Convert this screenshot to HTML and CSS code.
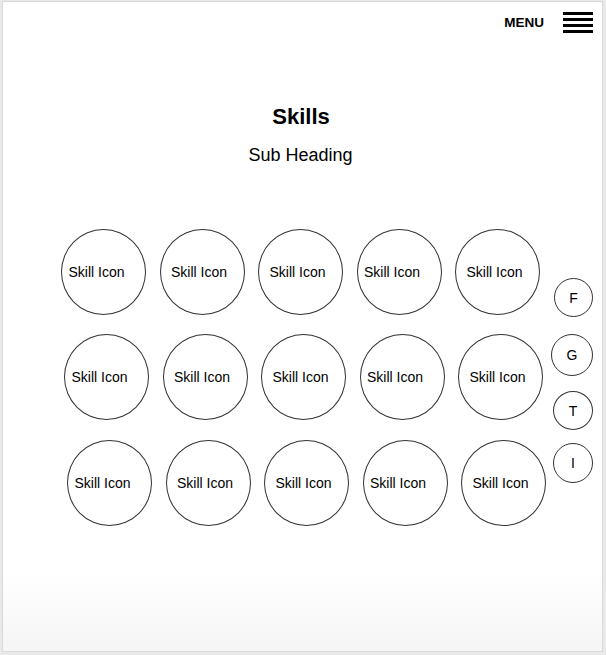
FILE: index.html
```html
<!DOCTYPE html>
<html>
<head>
<meta charset="utf-8">
<link rel="stylesheet" href="styles.css">
</head>
<body>
<div class="frame">
  <header class="header">
    <span class="menu-label">MENU</span>
    <span class="burger"><i></i><i></i><i></i><i></i></span>
  </header>
  <h1 class="title">Skills</h1>
  <p class="subtitle">Sub Heading</p>
  <div class="content">
    <div class="grid">
      <div class="row row-1">
        <div class="skill">Skill Icon</div>
        <div class="skill">Skill Icon</div>
        <div class="skill">Skill Icon</div>
        <div class="skill">Skill Icon</div>
        <div class="skill">Skill Icon</div>
      </div>
      <div class="row row-2">
        <div class="skill">Skill Icon</div>
        <div class="skill">Skill Icon</div>
        <div class="skill">Skill Icon</div>
        <div class="skill">Skill Icon</div>
        <div class="skill">Skill Icon</div>
      </div>
      <div class="row row-3">
        <div class="skill">Skill Icon</div>
        <div class="skill">Skill Icon</div>
        <div class="skill">Skill Icon</div>
        <div class="skill">Skill Icon</div>
        <div class="skill">Skill Icon</div>
      </div>
    </div>
    <div class="social">
      <div class="soc soc-f">F</div>
      <div class="soc soc-g">G</div>
      <div class="soc soc-t">T</div>
      <div class="soc soc-i">I</div>
    </div>
  </div>
</div>
</body>
</html>
```
FILE: styles.css
```css
html, body {
  margin: 0;
  padding: 0;
}
body {
  background: #e9e9e9;
  font-family: "Liberation Sans", Arial, sans-serif;
  color: #000;
}
.frame {
  box-sizing: border-box;
  margin: 1px 3px 3px 2px;
  height: 651px;
  border: 1px solid #d9d9d9;
  background: linear-gradient(to bottom, #ffffff 0%, #ffffff 88%, #f5f5f5 100%);
  overflow: hidden;
}
.header {
  display: flex;
  justify-content: flex-end;
  align-items: center;
  padding: 10px 9px 0 0;
  height: 21px;
}
.menu-label {
  font-weight: bold;
  font-size: 13.5px;
  margin-right: 19px;
  line-height: 16px;
}
.burger {
  display: flex;
  flex-direction: column;
  gap: 3px;
  width: 30px;
}
.burger i {
  display: block;
  height: 3px;
  background: #000;
}
.title {
  margin: 71px 0 0;
  padding-right: 3px;
  text-align: center;
  font-size: 22px;
  line-height: 26px;
  font-weight: bold;
}
.subtitle {
  margin: 15px 0 0;
  padding-right: 4px;
  text-align: center;
  font-size: 18px;
  line-height: 20px;
}
.content {
  display: flex;
  margin-top: 64px;
}
.grid {
  display: flex;
  flex-direction: column;
  gap: 19px;
  padding-left: 58px;
}
.row {
  display: flex;
  gap: 13.5px;
}
.row-2 {
  margin-left: 3px;
}
.row-3 {
  margin-left: 6px;
  margin-top: 1px;
}
.skill {
  box-sizing: border-box;
  width: 85px;
  height: 86px;
  border: 1px solid #333;
  border-radius: 50%;
  display: flex;
  align-items: center;
  justify-content: center;
  padding-right: 6px;
  font-size: 14px;
}
.skill:nth-child(3n+1) {
  padding-right: 14px;
}
.social {
  margin-left: auto;
  margin-right: 9px;
  padding-top: 49px;
  display: flex;
  flex-direction: column;
  align-items: flex-end;
}
.soc {
  box-sizing: border-box;
  width: 40px;
  height: 40px;
  border: 1px solid #333;
  border-radius: 50%;
  display: flex;
  align-items: center;
  justify-content: center;
  font-size: 14px;
}
.soc-f {
  width: 39px;
  height: 39px;
}
.soc-g {
  width: 42px;
  height: 42px;
  margin-top: 17px;
}
.soc-t {
  margin-top: 15px;
  height: 39px;
}
.soc-i {
  margin-top: 13px;
}
```
